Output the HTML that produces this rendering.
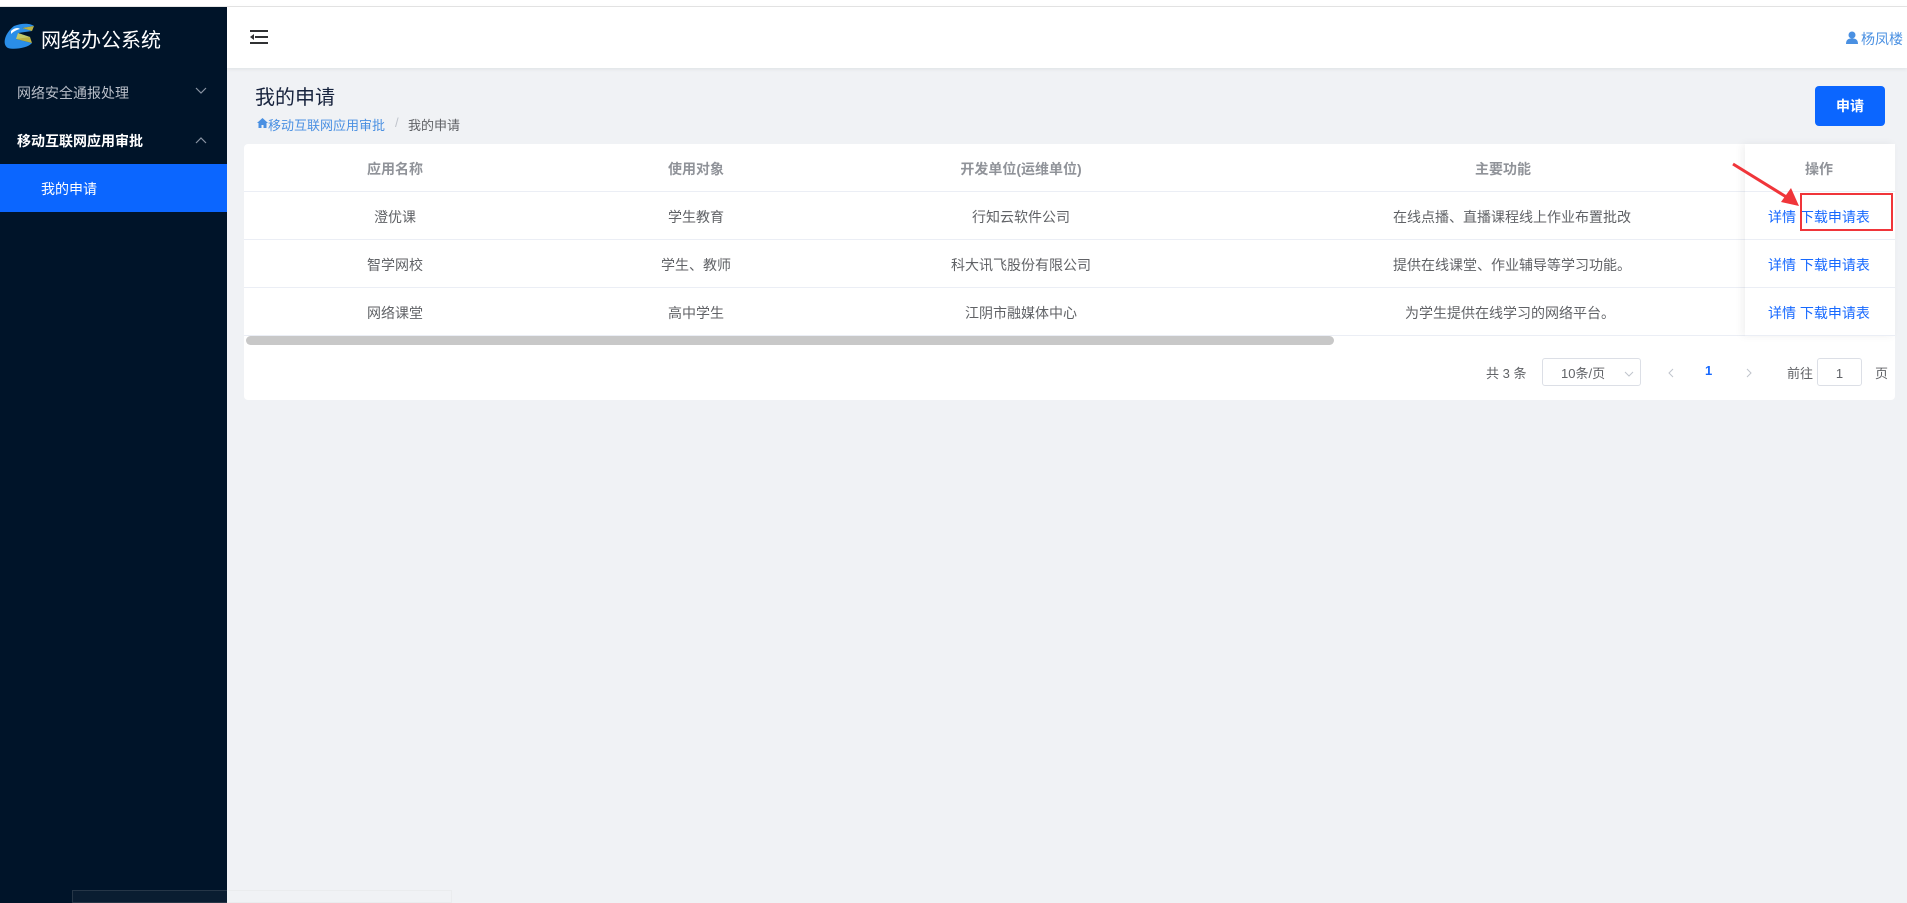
<!DOCTYPE html>
<html><head><meta charset="utf-8"><style>
*{margin:0;padding:0;box-sizing:border-box}
body{width:1907px;height:903px;position:relative;overflow:hidden;background:#f0f2f5;font-family:"Liberation Sans","Noto Sans CJK SC",sans-serif;font-size:14px;color:#606266}
.a{position:absolute;white-space:nowrap}
.side{left:0;top:7px;width:227px;height:896px;background:#001429}
.hdr{left:227px;top:7px;width:1680px;height:61px;background:#fff;box-shadow:0 1px 4px rgba(0,21,41,.08)}
.card{left:244px;top:144px;width:1651px;height:256px;background:#fff;border-radius:4px}
.line{position:absolute;left:0;height:1px;background:#ebeef5}
.c{position:absolute;text-align:center;transform:translateX(-50%);white-space:nowrap}
.lnk{color:#1769ff}
</style></head><body>
<div class="a" style="left:0;top:0;width:1907px;height:7px;background:#fff;border-bottom:1px solid #e6e6e6"></div>
<div class="a side"></div>
<svg class="a" style="left:2px;top:22px" width="34" height="30" viewBox="0 0 34 30"><path d="M12 4 C22 0 30 2 32 4 L20 6 L30 9 L16 11 L28 15 L14 17 L30 21 C26 26 12 28 6 26 C0 23 2 12 12 4Z" fill="#2a8ee8"/><path d="M9 9 C12 6 16 5 18 7 C14 8 11 10 9 12Z" fill="#fff"/><path d="M20 6 L32 4 L30 9Z M16 11 L28 15 L30 21 L14 17Z" fill="#e8d84a" opacity=".8"/></svg>
<div class="a" style="left:41px;top:24px;font-size:20px;color:#fff">网络办公系统</div>
<div class="a" style="left:17px;top:83px;font-size:14px;color:#b8bec8">网络安全通报处理</div>
<svg class="a" style="left:195px;top:87px" width="12" height="8"><path d="M1 1 L6 6 L11 1" stroke="#8a94a3" fill="none" stroke-width="1.2"/></svg>
<div class="a" style="left:17px;top:131px;font-size:14px;color:#fff;font-weight:bold">移动互联网应用审批</div>
<svg class="a" style="left:195px;top:136px" width="12" height="8"><path d="M1 7 L6 2 L11 7" stroke="#8a94a3" fill="none" stroke-width="1.2"/></svg>
<div class="a" style="left:0;top:164px;width:227px;height:48px;background:#0b66ff"></div>
<div class="a" style="left:41px;top:179px;font-size:14px;color:#fff">我的申请</div>
<div class="a hdr"></div>
<svg class="a" style="left:250px;top:30px" width="18" height="14"><rect x="0" y="0" width="18" height="2" fill="#303133"/><rect x="5" y="6" width="13" height="2" fill="#303133"/><rect x="0" y="12" width="18" height="2" fill="#303133"/><path d="M0 7 L4 4 L4 10Z" fill="#303133"/></svg>
<svg class="a" style="left:1846px;top:31px" width="12" height="13"><circle cx="6" cy="4" r="3.5" fill="#4a90e2"/><path d="M0 13 C0 8 3 7.5 6 7.5 C9 7.5 12 8 12 13Z" fill="#4a90e2"/></svg>
<div class="a" style="left:1861px;top:29px;font-size:14px;color:#4a90e2">杨凤楼</div>
<div class="a" style="left:255px;top:81px;font-size:20px;color:#17233d">我的申请</div>
<svg class="a" style="left:257px;top:118px" width="11" height="10"><path d="M5.5 0 L11 5 L9.5 5 L9.5 10 L6.5 10 L6.5 7 L4.5 7 L4.5 10 L1.5 10 L1.5 5 L0 5Z" fill="#4a90e2"/></svg>
<div class="a" style="left:268px;top:115px;font-size:13px;color:#4a90e2">移动互联网应用审批</div>
<div class="a" style="left:395px;top:115px;font-size:13px;color:#c0c4cc">/</div>
<div class="a" style="left:408px;top:115px;font-size:13px;color:#606266">我的申请</div>
<div class="a" style="left:1815px;top:86px;width:70px;height:40px;background:#0b66ff;border-radius:4px;color:#fff;font-weight:bold;text-align:center;line-height:40px;font-size:14px">申请</div>
<div class="a card">
<div class="line" style="top:47px;width:1651px"></div>
<div class="line" style="top:95px;width:1651px"></div>
<div class="line" style="top:143px;width:1651px"></div>
<div class="line" style="top:191px;width:1651px"></div>
<div class="a" style="left:2px;top:192px;width:1088px;height:9px;background:#c8c8c8;border-radius:5px"></div>
<div class="a" style="left:1501px;top:0;width:150px;height:192px;background:#fff;box-shadow:-3px 0 8px rgba(0,0,0,.06)"></div>
<div class="line" style="top:47px;left:1501px;width:150px"></div>
<div class="line" style="top:95px;left:1501px;width:150px"></div>
<div class="line" style="top:143px;left:1501px;width:150px"></div>
<div class="line" style="top:191px;left:1501px;width:150px"></div>
<div style="color:#909399;font-weight:bold">
<div class="c" style="left:151px;top:15px">应用名称</div>
<div class="c" style="left:452px;top:15px">使用对象</div>
<div class="c" style="left:777px;top:15px">开发单位(运维单位)</div>
<div class="c" style="left:1259px;top:15px">主要功能</div>
<div class="c" style="left:1575px;top:15px">操作</div>
</div>
<div class="c" style="left:151px;top:63px">澄优课</div>
<div class="c" style="left:452px;top:63px">学生教育</div>
<div class="c" style="left:777px;top:63px">行知云软件公司</div>
<div class="c" style="left:1268px;top:63px">在线点播、直播课程线上作业布置批改</div>
<div class="c" style="left:151px;top:111px">智学网校</div>
<div class="c" style="left:452px;top:111px">学生、教师</div>
<div class="c" style="left:777px;top:111px">科大讯飞股份有限公司</div>
<div class="c" style="left:1268px;top:111px">提供在线课堂、作业辅导等学习功能。</div>
<div class="c" style="left:151px;top:159px">网络课堂</div>
<div class="c" style="left:452px;top:159px">高中学生</div>
<div class="c" style="left:777px;top:159px">江阴市融媒体中心</div>
<div class="c" style="left:1266px;top:159px">为学生提供在线学习的网络平台。</div>
<div class="a lnk" style="left:1524px;top:63px">详情 下载申请表</div>
<div class="a lnk" style="left:1524px;top:111px">详情 下载申请表</div>
<div class="a lnk" style="left:1524px;top:159px">详情 下载申请表</div>
<div class="a" style="left:1242px;top:219px;font-size:13px">共 3 条</div>
<div class="a" style="left:1298px;top:214px;width:99px;height:28px;border:1px solid #dcdfe6;border-radius:3px;font-size:13px;padding-left:18px;line-height:30px">10条/页</div>
<svg class="a" style="left:1380px;top:227px" width="10" height="6"><path d="M1 1 L5 5 L9 1" stroke="#c0c4cc" fill="none"/></svg>
<svg class="a" style="left:1424px;top:224px" width="6" height="10"><path d="M5 1 L1 5 L5 9" stroke="#c0c4cc" fill="none"/></svg>
<div class="a" style="left:1461px;top:219px;font-size:13px;color:#1769ff;font-weight:bold">1</div>
<svg class="a" style="left:1502px;top:224px" width="6" height="10"><path d="M1 1 L5 5 L1 9" stroke="#c0c4cc" fill="none"/></svg>
<div class="a" style="left:1543px;top:219px;font-size:13px">前往</div>
<div class="a" style="left:1573px;top:214px;width:45px;height:28px;border:1px solid #dcdfe6;border-radius:3px;font-size:13px;text-align:center;line-height:30px">1</div>
<div class="a" style="left:1631px;top:219px;font-size:13px">页</div>
</div>
<div class="a" style="left:1800px;top:193px;width:93px;height:38px;border:2px solid #f0353a"></div>
<svg class="a" style="left:1725px;top:158px" width="80" height="55"><path d="M8 6 L63 40" stroke="#f0353a" stroke-width="3"/><path d="M74 48 L56 44 L66 30Z" fill="#f0353a"/></svg>
<div class="a" style="left:72px;top:890px;width:380px;height:13px;background:rgba(255,255,255,.04);border:1px solid rgba(200,200,200,.15)"></div>
</body></html>
